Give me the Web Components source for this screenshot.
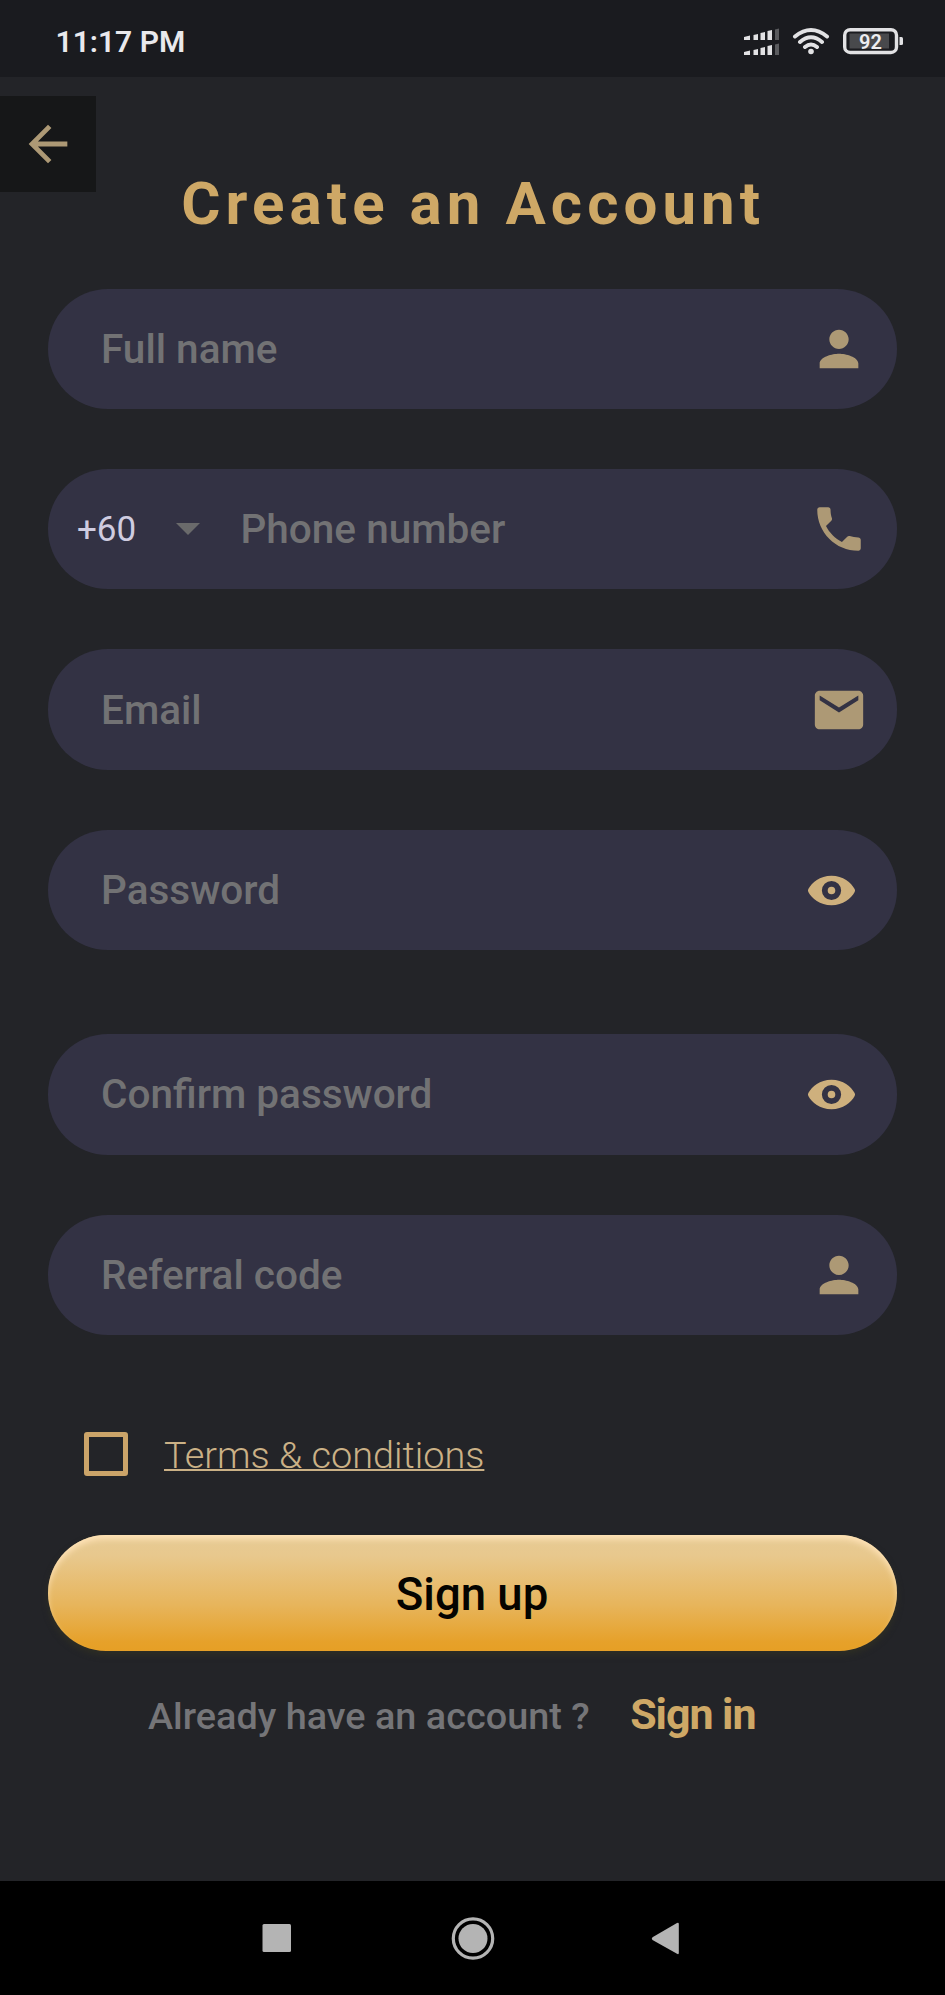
<!DOCTYPE html>
<html lang="en">
<head>
<meta charset="utf-8">
<title>Create an Account</title>
<style>
html,body{margin:0;padding:0;background:#232428}
body{font-family:Roboto,sans-serif;width:945px;height:1995px;overflow:hidden}
</style>
</head>
<body>
<signup-app></signup-app>
<script>
const define = (name, html) => customElements.define(name, class extends HTMLElement {
  constructor() {
    super();
    const t = document.createElement('template');
    t.innerHTML = html;
    this.attachShadow({mode: 'open'}).appendChild(t.content.cloneNode(true));
  }
});

const ICONS = {
  person: '<path d="M12 12c2.210 0 4-1.790 4-4s-1.790-4-4-4-4 1.790-4 4 1.790 4 4 4zm0 2c-2.670 0-8 1.340-8 4v2h16v-2c0-2.660-5.330-4-8-4z"/>',
  phone: '<path d="M6.620 10.790c1.440 2.830 3.760 5.140 6.590 6.590l2.200-2.200c.27-.27.67-.36 1.020-.24 1.120.37 2.330.57 3.570.57.55 0 1 .45 1 1V20c0 .55-.45 1-1 1-9.390 0-17-7.610-17-17 0-.55.45-1 1-1h3.500c.55 0 1 .45 1 1 0 1.250.2 2.450.57 3.570.11.35.03.74-.25 1.020l-2.200 2.200z"/>',
  email: '<path d="M20 4H4c-1.100 0-1.990.9-1.990 2L2 18c0 1.100.9 2 2 2h16c1.100 0 2-.9 2-2V6c0-1.100-.9-2-2-2zm0 4l-8 5-8-5V6l8 5 8-5v2z"/>',
  eye: '<path fill-rule="evenodd" d="M12 5.800C7.100 5.800 3.700 8.700 2.250 11.400q-.35.6 0 1.200C3.700 15.300 7.100 18.200 12 18.200s8.300-2.900 9.750-5.600q.35-.6 0-1.200C20.300 8.700 16.900 5.800 12 5.800zM12 7.950a4.050 4.050 0 1 1 0 8.100 4.050 4.050 0 0 1 0-8.100zM12 10.400a1.600 1.600 0 1 0 0 3.200 1.600 1.600 0 0 0 0-3.200z"/>',
  back: '<path d="M20 11H7.830l5.590-5.590L12 4l-8 8 8 8 1.410-1.410L7.830 13H20v-2z"/>'
};

customElements.define('app-icon', class extends HTMLElement {
  constructor() {
    super();
    this.attachShadow({mode: 'open'});
  }
  connectedCallback() {
    this.shadowRoot.innerHTML = `<style>:host{display:block;width:58px;height:58px;flex:none}svg{display:block;width:100%;height:100%;fill:currentColor}</style>
    <svg viewBox="0 0 24 24">${ICONS[this.getAttribute('name')]}</svg>`;
  }
});

define('status-bar', `<style>
:host{display:flex;align-items:center;justify-content:space-between;height:77px;box-sizing:border-box;padding:6px 41px 0 55.500px;background:#1a1b1f;color:#e9e9ec}
.time{font-size:30px;font-weight:600;line-height:36px;white-space:nowrap}
svg{display:block}
</style>
<span class="time">11:17 PM</span>
<svg width="164" height="36" viewBox="740 24 164 36">
  <g fill="#e2e2e4">
    <path d="M744 37l6-1.500V40h-6zM753.500 35l4.500-1V40h-4.500zM760.500 33l4.500-1V40h-4.500zM767.500 31l4.500-1V40h-4.500z"/>
    <path d="M744 52l6-1.500V55h-6zM753.500 50l4.500-1V55h-4.500zM760.500 48l4.500-1V55h-4.500zM767.500 46l4.500-1V55h-4.500z"/>
  </g>
  <path fill="#5a5b5e" d="M775 29.500l4-1V40h-4zM775 44.500l4-1V55h-4z"/>
  <g fill="none" stroke="#e2e2e4" stroke-width="4" stroke-linecap="round">
    <path d="M795 36.500Q811 23.500 827 36.500M800 42Q811 32.500 822 42M805 47Q811 42 817 47"/>
  </g>
  <circle cx="811" cy="51.500" r="2.800" fill="#e2e2e4"/>
  <rect x="844.700" y="29.700" width="51.800" height="22.800" rx="5.500" fill="none" stroke="#e2e2e4" stroke-width="3.400"/>
  <rect x="849.500" y="33.500" width="39.500" height="15" fill="#48494c"/>
  <path fill="#e2e2e4" d="M899.500 37h2q1.500 0 1.500 1.500v5q0 1.500-1.500 1.500h-2z"/>
  <text x="870.500" y="48.800" text-anchor="middle" font-family="Roboto" font-size="20" font-weight="600" fill="#ededf0">92</text>
</svg>`);

define('back-button', `<style>
:host{display:flex;align-items:center;justify-content:center;width:96px;height:96px;background:#161718;color:#ad9975}
</style><app-icon name="back"></app-icon>`);

define('form-field', `<style>
:host{display:flex;align-items:center;height:120.300px;box-sizing:border-box;border-radius:60px;background:#333244;padding:0 29.300px 0 53px;color:#727274;font-size:40.500px;font-weight:500;white-space:nowrap}
.label{flex:1;line-height:48px}
::slotted([slot=icon]){color:#ad9975}
</style><slot name="prefix"></slot><span class="label"><slot></slot></span><slot name="icon"></slot>`);

define('country-code', `<style>
:host{display:flex;align-items:center;width:163.500px;margin-left:-24px;color:#cfcce0;font-size:35px;font-weight:400}
span{width:99px}
i{width:0;height:0;border:12px solid transparent;border-top-color:#6a6a6b;border-bottom:0}
</style><span><slot></slot></span><i></i>`);

define('terms-row', `<style>
:host{display:flex;align-items:center;color:#cbb186;font-size:37.850px;font-weight:300;white-space:nowrap}
i{width:44px;height:44px;box-sizing:border-box;border:5px solid #cba469;border-radius:3px;margin-right:36px}
span{line-height:45px;padding-top:4px;text-decoration:underline;text-decoration-thickness:2px;text-underline-offset:1px;text-decoration-skip-ink:none}
</style><i></i><span><slot></slot></span>`);

define('primary-button', `<style>
:host{display:flex;align-items:center;justify-content:center;height:116px;box-sizing:border-box;border-radius:58px;color:#050400;font-size:45.500px;font-weight:500;line-height:53px;padding:3px 1px 0 0;
background:linear-gradient(#e7cb95 0,#e8c88d 18%,#e7b55c 60%,#e6a12a 92%,#e69f25);box-shadow:inset 0 5px 6px -1px #ffe3b8,0 4px 6px #2e2e24}
</style><slot></slot>`);

define('nav-bar', `<style>
:host{display:block;height:114px;background:#000}
svg{display:block}
</style>
<svg width="945" height="114" viewBox="0 0 945 114" fill="#b4b4b4">
<rect x="262.500" y="43" width="28.500" height="28" rx="1.500"/>
<circle cx="473" cy="57.500" r="14.500"/>
<circle cx="473" cy="57.500" r="19.700" fill="none" stroke="#b4b4b4" stroke-width="3.200"/>
<path d="M652.500 56.200L677 42q1.800-.8 1.800 1V72q0 1.800-1.800.8L652.500 59q-1.500-1.400 0-2.800z"/>
</svg>`);

define('signup-app', `<style>
:host{display:flex;flex-direction:column;height:1995px;background:#232428;font-family:Roboto,sans-serif}
main{flex:1;padding-top:19px}
h1{margin:-23.500px 0 0;padding-left:1.500px;text-align:center;color:#cea866;font-size:60px;line-height:70px;font-weight:700;letter-spacing:5.070px;white-space:nowrap}
form{margin:50.200px 48px 0;display:flex;flex-direction:column}
form-field{margin-bottom:60.100px}
.gap{margin-bottom:84.100px}
.bright{width:57px;height:57px;margin-right:7.500px}
form-field app-icon.bright{color:#ceb07d}
terms-row{margin:34.300px 0 56.500px 36px}
footer{display:flex;align-items:baseline;margin:38.400px 0 0 100px;color:#757578;font-weight:500;font-size:37.850px;line-height:50px;white-space:nowrap}
footer b{margin-left:40.500px;color:#cea866;font-size:43px;font-weight:700;letter-spacing:-1.050px}
</style>
<status-bar></status-bar>
<main>
<back-button></back-button>
<h1>Create an Account</h1>
<form>
<form-field>Full name<app-icon slot="icon" name="person"></app-icon></form-field>
<form-field><country-code slot="prefix">+60</country-code>Phone number<app-icon slot="icon" name="phone"></app-icon></form-field>
<form-field>Email<app-icon slot="icon" name="email"></app-icon></form-field>
<form-field class="gap">Password<app-icon slot="icon" class="bright" name="eye"></app-icon></form-field>
<form-field>Confirm password<app-icon slot="icon" class="bright" name="eye"></app-icon></form-field>
<form-field>Referral code<app-icon slot="icon" name="person"></app-icon></form-field>
<terms-row>Terms &amp; conditions</terms-row>
<primary-button>Sign up</primary-button>
<footer><span>Already have an account ?</span><b>Sign in</b></footer>
</form>
</main>
<nav-bar></nav-bar>`);
</script>
</body>
</html>
